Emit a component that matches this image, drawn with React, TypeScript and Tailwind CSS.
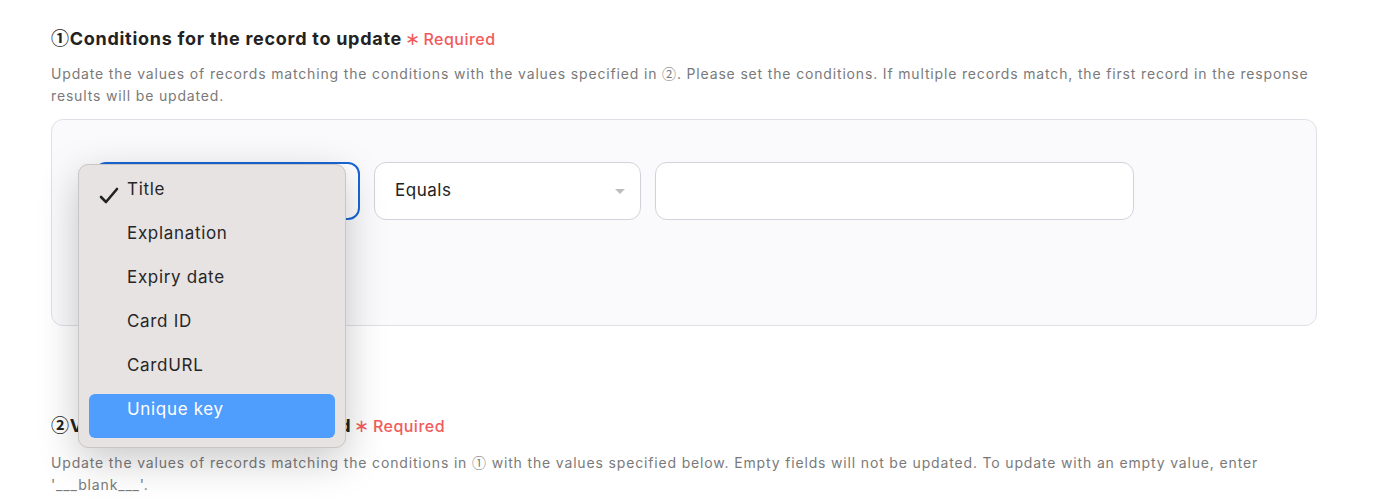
import { useState } from "react";

const FIELDS = ["Title", "Explanation", "Expiry date", "Card ID", "CardURL", "Unique key"];

function Num({ children }: { children: React.ReactNode }) {
  return <span className="font-['Noto_Sans_CJK_JP',sans-serif] leading-none">{children}</span>;
}

function Required() {
  return (
    <span className="ml-[3px] inline-flex items-center text-[16px] font-medium tracking-[0.03em] text-[#f25b5b]">
      <span className="mr-[3px] text-[18px] leading-none">∗</span>
      Required
    </span>
  );
}

function SectionTitle({ children }: { children: React.ReactNode }) {
  return (
    <h2 className="flex items-center text-[18px] font-bold leading-[26px] tracking-[0.04em] text-[#222]">
      <span>{children}</span>
      <Required />
    </h2>
  );
}

function Caret() {
  return (
    <svg width="12" height="7" viewBox="0 0 12 7" className="shrink-0">
      <path d="M1 1h10L6 6z" fill="#bdbdbd" />
    </svg>
  );
}

function FieldMenu({ selected, active }: { selected: string; active: string }) {
  return (
    <div className="absolute left-[-16px] top-[2px] z-10 w-[268px] rounded-[10px] border border-[#c9c5c5] bg-[#e7e3e3] px-[10px] py-[9px] shadow-[0_12px_40px_rgba(0,0,0,0.22)]">
      {FIELDS.map((f) => {
        const isActive = f === active;
        return (
          <div
            key={f}
            className={`relative h-[44px] rounded-[6px] pl-[38px] pt-[3px] text-[17px] leading-[24px] tracking-[0.04em] ${
              isActive ? "bg-[#4f9dfd] text-white" : "text-[#262626]"
            }`}
          >
            {f === selected && (
              <svg width="20" height="18" viewBox="0 0 20 18" className="absolute left-[10px] top-[13px]">
                <path d="M2 10l5 5L18 2" fill="none" stroke="#222" strokeWidth="2.6" strokeLinecap="round" strokeLinejoin="round" />
              </svg>
            )}
            {f}
          </div>
        );
      })}
    </div>
  );
}

export default function App() {
  const [value, setValue] = useState("");

  return (
    <div className="min-h-[500px] bg-white px-[51px] pt-[26px]" style={{ fontFamily: "Inter, 'Noto Sans', sans-serif" }}>
      {/* Section 1 */}
      <SectionTitle>
        <Num>①</Num>Conditions for the record to update
      </SectionTitle>
      <p className="mt-[11px] text-[14px] leading-[22px] tracking-[0.06em] text-[#7a7a7a]">
        Update the values of records matching the conditions with the values specified in <Num>②</Num>. Please set the
        conditions. If multiple records match, the first record in the response results will be updated.
      </p>

      <div className="mt-[12px] h-[207px] w-[1266px] rounded-[12px] border border-[#dfe0e6] bg-[#fafafc] pl-[42px] pt-[42px]">
        <div className="flex items-center gap-[14px]">
          <div className="relative">
            <div className="flex h-[58px] w-[266px] items-center justify-between rounded-[12px] border-2 border-[#1a66d6] bg-white px-[18px]">
              <span className="text-[17px] text-[#222]">Title</span>
              <Caret />
            </div>
            <FieldMenu selected="Title" active="Unique key" />
          </div>
          <div className="flex h-[58px] w-[267px] items-center justify-between rounded-[12px] border border-[#d2d3da] bg-white pl-[20px] pr-[14px]">
            <span className="text-[17px] tracking-[0.03em] text-[#222]">Equals</span>
            <Caret />
          </div>
          <input
            value={value}
            onChange={(e) => setValue(e.target.value)}
            className="h-[58px] w-[479px] rounded-[12px] border border-[#d2d3da] bg-white px-[18px] text-[17px] outline-none"
          />
        </div>
      </div>

      {/* Section 2 */}
      <div className="mt-[87px]">
        <SectionTitle>
          <Num>②</Num>Values for the updated record
        </SectionTitle>
        <p className="mt-[13px] text-[14px] leading-[22px] tracking-[0.06em] text-[#7a7a7a]">
          Update the values of records matching the conditions in <Num>①</Num> with the values specified below. Empty
          fields will not be updated. To update with an empty value, enter '___blank___'.
        </p>
      </div>
    </div>
  );
}
